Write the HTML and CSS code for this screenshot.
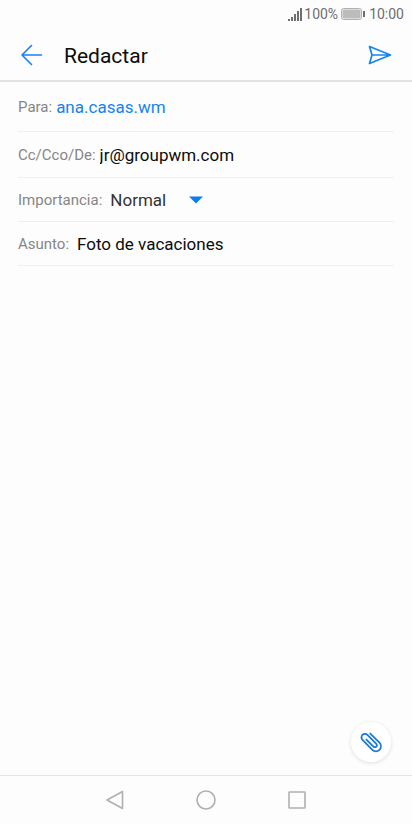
FILE: index.html
```html
<!DOCTYPE html>
<html lang="es">
<head>
<meta charset="utf-8">
<meta name="viewport" content="width=device-width, initial-scale=1">
<title>Redactar</title>
<link rel="stylesheet" href="styles.css">
</head>
<body>
<div class="status">
  <svg width="15" height="13" viewBox="0 0 15 13" fill="#6e6e6e" aria-hidden="true"><path d="M0 11h2v2H0zM3 9h2v4H3zM6 6h2v7H6zM9 3h2v10H9zM12 0h2v13h-2z"/></svg>
  <span class="percent">100%</span>
  <svg width="24" height="12" viewBox="0 0 24 12" aria-hidden="true"><rect x=".5" y=".5" width="20" height="11" rx="2" fill="#fdfdfd" stroke="#b0b0b0"/><rect x="1.500" y="1.500" width="18" height="9" rx="1" fill="#bcbcbc"/><path d="M22 3h2v6h-2z" fill="#6e6e6e"/></svg>
  <span class="clock">10:00</span>
</div>
<header class="bar">
  <button class="icon-button" type="button" aria-label="Atrás">
    <svg width="24" height="24" viewBox="0 0 24 24" fill="none" stroke="#1583f0" stroke-width="1.600" stroke-linecap="round" stroke-linejoin="round"><path d="M21.500 12H2M11.500 2.500L2 12l9.500 9.500"/></svg>
  </button>
  <h1>Redactar</h1>
  <button class="icon-button" type="button" aria-label="Enviar">
    <svg width="24" height="24" viewBox="0 0 24 24" fill="none" stroke="#1583f0" stroke-width="1.700" stroke-linejoin="round"><path d="M1.500 3.500L22.500 12 1.500 20.500 4 12zM4 12h18"/></svg>
  </button>
</header>
<main>
  <form class="fields">
    <div class="row tall">
      <label for="to">Para:</label>
      <input class="recipient" id="to" type="text" value="ana.casas.wm">
    </div>
    <div class="row">
      <label for="from">Cc/Cco/De:</label>
      <input id="from" type="text" value="jr@groupwm.com">
    </div>
    <div class="row short spaced">
      <label for="priority">Importancia:</label>
      <div class="picker">
        <select id="priority"><option>Normal</option><option>Alta</option><option>Baja</option></select>
        <svg class="caret" width="14" height="8" viewBox="0 0 14 8" aria-hidden="true"><path d="M0 .5h14L7 7.500z" fill="#0b7df0"/></svg>
      </div>
    </div>
    <div class="row short spaced">
      <label for="subject">Asunto:</label>
      <input id="subject" type="text" value="Foto de vacaciones">
    </div>
  </form>
  <textarea class="message" aria-label="Mensaje"></textarea>
  <button class="attach" type="button" aria-label="Adjuntar">
    <svg width="26" height="26" viewBox="-13 -13 26 26" fill="none" stroke="#1b7ad6" stroke-width="1.800" stroke-linecap="round"><path transform="rotate(45)" d="M-6.500-5.500H6.500a5 5 0 0 1 0 10H-7.500a3.500 3.500 0 0 1 0-7H5a2 2 0 0 1 0 4H-5"/></svg>
  </button>
</main>
<nav class="system">
  <button type="button" aria-label="Volver"><svg width="20" height="20" viewBox="0 0 20 20"><path d="M17.500 1.500v17L2 10z"/></svg></button>
  <button type="button" aria-label="Inicio"><svg width="20" height="20" viewBox="0 0 20 20"><circle cx="10" cy="10" r="9"/></svg></button>
  <button type="button" aria-label="Recientes"><svg width="20" height="20" viewBox="0 0 20 20"><rect x="2" y="2" width="16" height="16" rx=".5"/></svg></button>
</nav>
</body>
</html>
```

FILE: styles.css
```css
* {
  box-sizing: border-box;
}

body {
  margin: 0;
  min-height: 100vh;
  display: flex;
  flex-direction: column;
  background: #fdfdfd;
  color: #0c0c0c;
  font-family: Roboto, "Liberation Sans", sans-serif;
}

button {
  padding: 0;
  border: 0;
  background: none;
}

svg {
  display: block;
}

.status {
  height: 28px;
  padding: 0 8px;
  display: flex;
  align-items: center;
  justify-content: flex-end;
  color: #6e6e6e;
  font-size: 14px;
}

.percent {
  margin: 0 3px 0 1px;
}

.clock {
  margin-left: 4px;
}

.bar {
  height: 54px;
  padding: 2px 20px 0;
  display: flex;
  align-items: center;
  border-bottom: 2px solid #e2e2e2;
}

.bar h1 {
  flex: 1;
  margin: 0 0 0 20px;
  padding-top: 2px;
  font-size: 21px;
  line-height: 28px;
  font-weight: 400;
}

.fields {
  padding: 0 18px;
}

.row {
  height: 46px;
  display: flex;
  align-items: center;
  gap: 4px;
  border-bottom: 1px solid #f0f0f0;
}

.tall {
  height: 50px;
}

.short {
  height: 44px;
}

.spaced {
  gap: 8px;
}

.row label {
  color: #868686;
  font-size: 15px;
  line-height: 24px;
}

.row input,
.row select {
  padding: 0;
  border: 0;
  outline: 0;
  background: none;
  color: inherit;
  font: inherit;
  font-size: 17px;
  line-height: 24px;
}

.row input {
  flex: 1;
  min-width: 0;
}

.row .recipient {
  color: #1583f0;
}

.picker {
  display: grid;
  align-items: center;
  color: #333;
}

.picker select {
  grid-area: 1 / 1;
  width: 93px;
  appearance: none;
}

.caret {
  grid-area: 1 / 1;
  justify-self: end;
  pointer-events: none;
}

main {
  flex: 1;
  display: flex;
  flex-direction: column;
}

.message {
  flex: 1;
  padding: 12px 18px;
  border: 0;
  outline: 0;
  resize: none;
  background: none;
  font: inherit;
}

.attach {
  width: 40px;
  height: 40px;
  margin: 0 21px 13px;
  align-self: flex-end;
  display: grid;
  place-items: center;
  border-radius: 50%;
  background: #fff;
  box-shadow: 0 1px 4px rgba(0, 0, 0, 0.12);
}

.system {
  height: 49px;
  display: flex;
  align-items: center;
  justify-content: center;
  gap: 71px;
  border-top: 1px solid #e4e4e4;
}

.system svg {
  fill: none;
  stroke: #b0b0b0;
  stroke-width: 1.6;
  stroke-linejoin: round;
}
```
